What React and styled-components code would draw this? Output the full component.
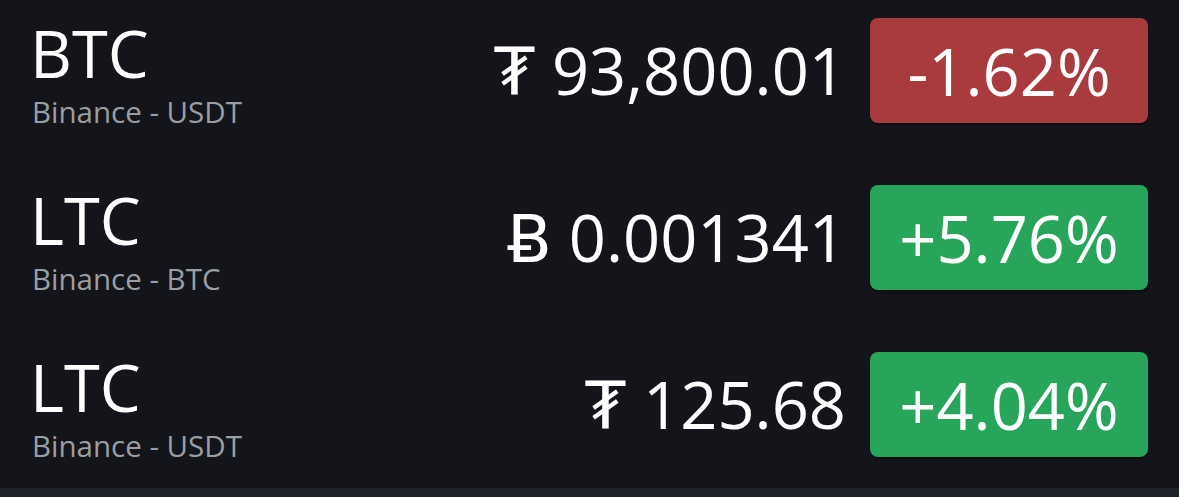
import React from "react";
import styled, { createGlobalStyle } from "styled-components";

const Global = createGlobalStyle`
  html, body {
    margin: 0;
    padding: 0;
    background: #13151a;
    overflow: hidden;
  }
  body {
    font-family: "Open Sans", "DejaVu Sans", sans-serif;
  }
`;

const tickers = [
  { base: "BTC", market: "Binance - USDT", sign: "₮", price: "93,800.01", change: -1.62 },
  { base: "LTC", market: "Binance - BTC", sign: "Ƀ", price: "0.001341", change: 5.76 },
  { base: "LTC", market: "Binance - USDT", sign: "₮", price: "125.68", change: 4.04 },
];

export default function App() {
  return (
    <Screen>
      <Global />
      <List>
        {tickers.map((t, i) => (
          <Row key={i}>
            <Pair>
              <Base>{t.base}</Base>
              <Market>{t.market}</Market>
            </Pair>
            <Price>
              {t.sign} {t.price}
            </Price>
            <Change $up={t.change >= 0}>
              {t.change >= 0 ? "+" : ""}
              {t.change.toFixed(2)}%
            </Change>
          </Row>
        ))}
      </List>
      <TabBar />
    </Screen>
  );
}

const Screen = styled.div`
  width: 1179px;
  height: 497px;
  display: flex;
  flex-direction: column;
  overflow: hidden;
  background: #13151a;
`;

const List = styled.div`
  flex: 1;
  margin-top: -13px;
  display: flex;
  flex-direction: column;
`;

const Row = styled.div`
  height: 167px;
  flex-shrink: 0;
  box-sizing: border-box;
  display: flex;
  align-items: center;
  padding: 0 31px 0 30px;
`;

const Pair = styled.div`
  flex: 1;
  display: flex;
  flex-direction: column;
  gap: 4px;
  padding-top: 6px;
`;

const Base = styled.div`
  color: #ffffff;
  font-size: 65px;
  line-height: 1.1;
`;

const Market = styled.div`
  color: #9b9ea4;
  font-size: 29.5px;
  line-height: 1.2;
  padding-left: 2px;
`;

const Price = styled.div`
  color: #ffffff;
  font-size: 65px;
  line-height: 1;
  margin-right: 24px;
  white-space: nowrap;
`;

const Change = styled.div`
  width: 278px;
  height: 105px;
  border-radius: 8px;
  display: flex;
  align-items: center;
  justify-content: center;
  color: #ffffff;
  font-size: 65px;
  background: ${(p) => (p.$up ? "#27a65b" : "#a93b3e")};
  box-shadow: 0 2px 2px rgba(0, 0, 0, 0.45);
`;

const TabBar = styled.div`
  height: 9px;
  flex-shrink: 0;
  background: #1f242b;
`;
